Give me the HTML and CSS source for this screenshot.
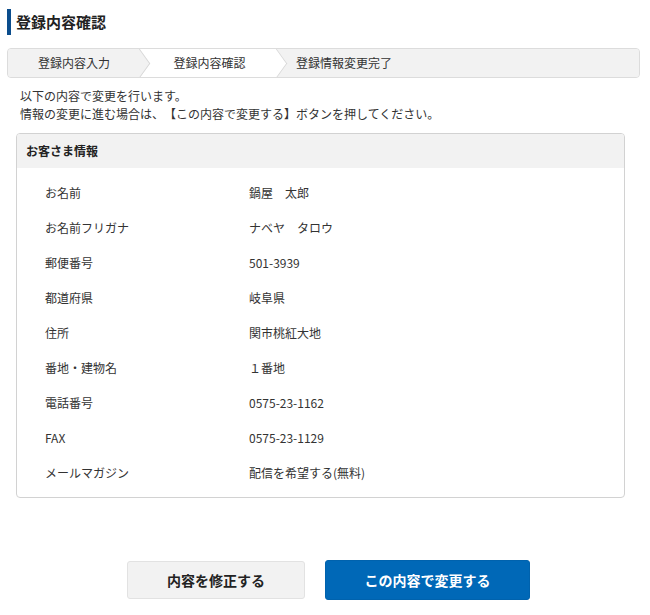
FILE: index.html
```html
<!DOCTYPE html>
<html lang="ja">
<head>
<meta charset="utf-8">
<title>登録内容確認</title>
<link rel="stylesheet" href="styles.css">
</head>
<body>
<div class="page">
  <h1 class="title">登録内容確認</h1>
  <ol class="steps">
    <li class="step step-1">登録内容入力</li>
    <li class="step step-2 current">登録内容確認</li>
    <li class="step step-3">登録情報変更完了</li>
  </ol>
  <p class="intro">以下の内容で変更を行います。<br>情報の変更に進む場合は、【この内容で変更する】ボタンを押してください。</p>
  <section class="card">
    <h2 class="card-head">お客さま情報</h2>
    <dl class="rows">
      <div class="row"><dt>お名前</dt><dd>鍋屋　太郎</dd></div>
      <div class="row"><dt>お名前フリガナ</dt><dd>ナベヤ　タロウ</dd></div>
      <div class="row"><dt>郵便番号</dt><dd>501-3939</dd></div>
      <div class="row"><dt>都道府県</dt><dd>岐阜県</dd></div>
      <div class="row"><dt>住所</dt><dd>関市桃紅大地</dd></div>
      <div class="row"><dt>番地・建物名</dt><dd>１番地</dd></div>
      <div class="row"><dt>電話番号</dt><dd>0575-23-1162</dd></div>
      <div class="row"><dt>FAX</dt><dd>0575-23-1129</dd></div>
      <div class="row"><dt>メールマガジン</dt><dd>配信を希望する(無料)</dd></div>
    </dl>
  </section>
  <div class="actions">
    <button class="btn btn-back" type="button">内容を修正する</button>
    <button class="btn btn-submit" type="button">この内容で変更する</button>
  </div>
</div>
</body>
</html>
```

FILE: styles.css
```css
* { box-sizing: border-box; }
html, body { margin: 0; padding: 0; background: #fff; }
body {
  font-family: "Noto Sans CJK JP", "Noto Sans", "DejaVu Sans", sans-serif;
  color: #333;
  font-size: 12px;
  text-spacing-trim: space-all;
}
.page {
  padding: 9px 25px 0 7px;
}
.title {
  margin: 0;
  border-left: 4px solid #0b4d8c;
  padding-left: 5px;
  height: 26px;
  line-height: 26px;
  font-size: 15px;
  font-weight: 700;
  color: #222;
}
.steps {
  list-style: none;
  margin: 13px -15px 0 0;
  padding: 0;
  display: flex;
  height: 30px;
  border: 1px solid #dcdcdc;
  border-radius: 4px;
  background: #f2f2f2;
  overflow: hidden;
}
.step {
  position: relative;
  height: 28px;
  line-height: 28px;
  font-size: 12px;
  color: #333;
  background: #f2f2f2;
}
.step-1 { width: 132px; text-align: center; padding-right: 0; z-index: 3; }
.step-2 { width: 137px; text-align: center; padding-left: 2px; z-index: 2; }
.step-3 { flex: 1; padding-left: 19px; z-index: 1; }
.step.current { background: #fff; }
.step-1::after, .step-2::after {
  content: "";
  position: absolute;
  top: 4px;
  right: -10px;
  width: 20px;
  height: 20px;
  background: inherit;
  border-top: 1px solid #d6d6d6;
  border-right: 1px solid #d6d6d6;
  transform: scaleX(0.72) rotate(45deg);
}
.intro {
  margin: 9px 0 0 13px;
  line-height: 18px;
  font-size: 12px;
  color: #333;
}
.card {
  margin: 10px 0 0 9px;
  width: 609px;
  border: 1px solid #d2d2d2;
  border-radius: 4px;
  overflow: hidden;
}
.card-head {
  margin: 0;
  height: 34px;
  line-height: 34px;
  padding-left: 9px;
  background: #f2f2f2;
  font-size: 12px;
  font-weight: 700;
  color: #222;
}
.rows {
  margin: 0;
  padding: 7px 0 7px 28px;
}
.row {
  display: flex;
  height: 35px;
  align-items: center;
}
.row dt {
  width: 204px;
  margin: 0;
}
.row dd {
  margin: 0;
}
.actions {
  display: flex;
  justify-content: center;
  gap: 20px;
  margin-top: 62px;
  padding-left: 25px;
  align-items: center;
}
.btn {
  font-family: inherit;
  font-size: 14px;
  font-weight: 700;
  border-radius: 3px;
  cursor: pointer;
}
.btn-back {
  width: 178px;
  height: 38px;
  background: #f2f2f2;
  border: 1px solid #e2e2e2;
  color: #222;
}
.btn-submit {
  width: 205px;
  height: 40px;
  background: #0068b7;
  border: 1px solid #0062ad;
  color: #fff;
}
```
